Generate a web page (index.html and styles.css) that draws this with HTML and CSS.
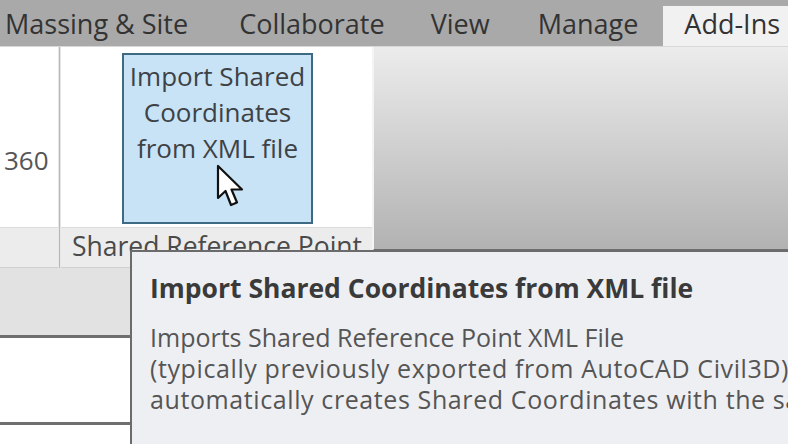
FILE: index.html
```html
<!DOCTYPE html>
<html>
<head>
<meta charset="utf-8">
<link rel="stylesheet" href="styles.css">
</head>
<body>
<div class="app">
  <div class="tabbar">
    <div class="tab t1">Massing &amp; Site</div>
    <div class="tab t2">Collaborate</div>
    <div class="tab t3">View</div>
    <div class="tab t4">Manage</div>
    <div class="tab active">Add-Ins</div>
  </div>
  <div class="ribbon">
    <div class="panel p-left">
      <div class="panel-body"><span class="num">360</span></div>
      <div class="panel-foot"></div>
    </div>
    <div class="vsep"></div>
    <div class="panel p-main">
      <div class="panel-body">
        <div class="bigbtn">Import Shared<br>Coordinates<br>from XML file</div>
      </div>
      <div class="panel-foot"><span class="foot-label">Shared Reference Point</span></div>
    </div>
    <div class="rest"></div>
  </div>
  <div class="lower">
    <div class="graybar"></div>
    <div class="whitebox"></div>
    <div class="whitebox2"></div>
  </div>

  <div class="tooltip">
    <div class="tt-title">Import Shared Coordinates from XML file</div>
    <div class="tt-body">
      <div class="tt-line">Imports Shared Reference Point XML File</div>
      <div class="tt-line wide">(typically previously exported from AutoCAD Civil3D) and</div>
      <div class="tt-line wide">automatically creates Shared Coordinates with the same</div>
    </div>
  </div>

  <svg class="cursor" width="32" height="46" viewBox="0 0 32 46">
    <path d="M2 2 L2 34 L9.5 27 L15 41 L21 38.5 L15.5 25.5 L26 25.5 Z" fill="#fff" stroke="#111" stroke-width="2.2" stroke-linejoin="round"/>
  </svg>
</div>
</body>
</html>
```
FILE: styles.css
```css
* { box-sizing: border-box; }
html, body { margin: 0; padding: 0; }
body {
  width: 788px; height: 444px; overflow: hidden;
  font-family: "Open Sans", "Noto Sans", sans-serif;
  background: #fff;
}
.app { position: relative; width: 788px; height: 444px; overflow: hidden; }

.tabbar {
  height: 47px;
  background: #a9a9a9;
  display: flex;
  align-items: flex-end;
  border-bottom: 1px solid #d8d8d8;
}
.tab {
  font-size: 27px;
  color: #333;
  height: 40px;
  line-height: 35px;
  white-space: nowrap;
}
.t1 { margin-left: 5px; }
.t2 { margin-left: 51px; }
.t3 { margin-left: 46px; }
.t4 { margin-left: 48px; }
.active {
  margin-left: 25px;
  flex: 1;
  background: #f1f1f1;
  padding-left: 21px;
}

.ribbon {
  display: flex;
  height: 221px;
  background: #fff;
}
.panel { display: flex; flex-direction: column; }
.panel-body { flex: 1; background: #fff; }
.panel-foot {
  height: 41px;
  background: #ececec;
  border-top: 1px solid #dcdcdc;
  border-bottom: 1px solid #d0d0d0;
}
.p-left { width: 58px; }
.p-left .panel-body { padding: 95px 0 0 4px; }
.num { display: block; font-size: 26px; line-height: 36px; color: #555; }
.vsep { width: 3px; background: linear-gradient(to right, #fff, #b8b8b8, #fff); }
.p-main { width: 311px; }
.p-main .panel-body { padding: 6px 0 3px 61px; }
.bigbtn {
  width: 191px;
  height: 171px;
  background: #c8e3f5;
  border: 2px solid #3f6a83;
  text-align: center;
  font-size: 26px;
  line-height: 36px;
  color: #3e4246;
  padding-top: 3px;
  white-space: nowrap;
}
.foot-label { display: block; font-size: 26.5px; line-height: 36px; color: #4a4a4a; padding: 0 0 0 11px; white-space: nowrap; }
.rest {
  flex: 1;
  height: 204px;
  background: linear-gradient(to bottom, #ececec 0%, #d8d8d8 35%, #b2b2b2 100%);
  border-left: 2px solid #f4f4f4;
  border-bottom: 2px solid #6e6e6e;
}

.lower { display: flex; flex-direction: column; }
.graybar { height: 70px; background: #e2e2e2; border-bottom: 3px solid #6f6f6f; }
.whitebox { height: 87px; background: #fff; border-bottom: 3px solid #6f6f6f; }
.whitebox2 { flex: 1; background: #fff; }

.tooltip {
  position: absolute;
  left: 130px; top: 250px;
  width: 700px; height: 220px;
  background: #eeeff3;
  border-left: 2px solid #6b6b6b;
  border-top: 2px solid #6b6b6b;
  padding: 21px 0 0 18px;
  color: #4a4a4a;
  white-space: nowrap;
}
.tt-title { font-size: 26.5px; font-weight: 700; color: #3a3a3a; line-height: 30px; }
.tt-body { margin-top: 19px; font-size: 25px; line-height: 31px; color: #555; }
.tt-line.wide { letter-spacing: 0.6px; }

.cursor { position: absolute; left: 216px; top: 164px; }
```
